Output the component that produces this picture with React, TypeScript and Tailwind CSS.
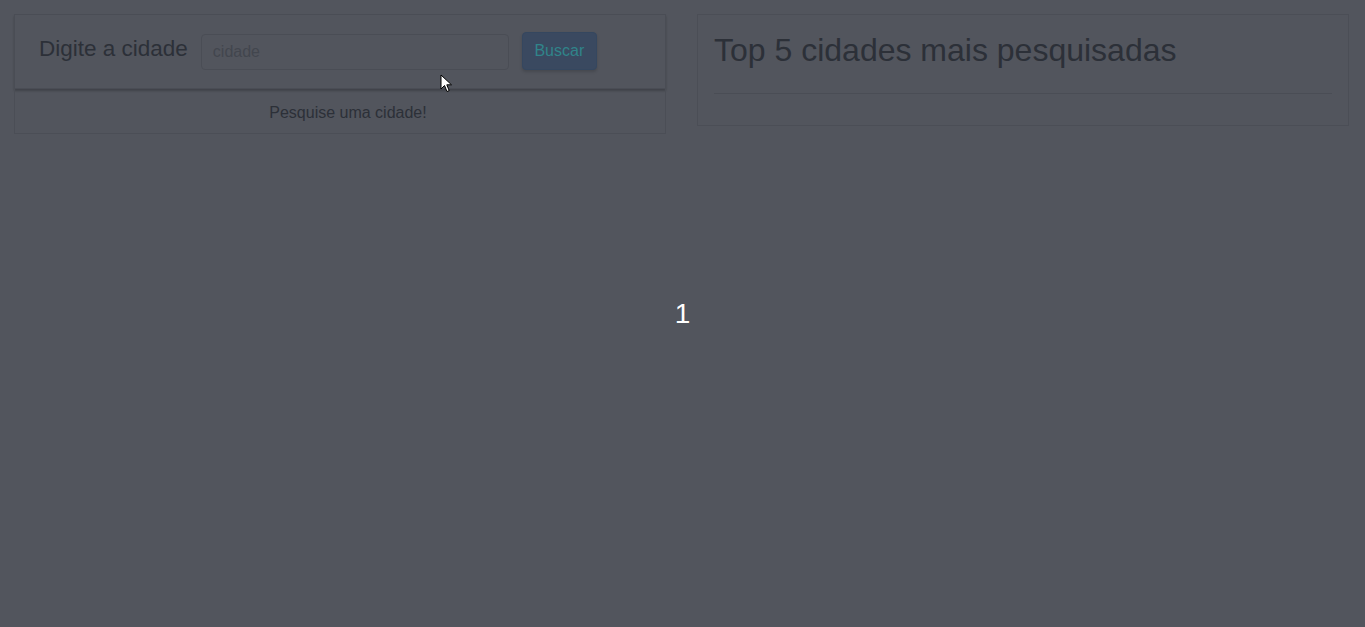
import React from 'react';

const Cursor: React.FC = () => (
  <svg className="absolute left-[440px] top-[74px]" width="14" height="20" viewBox="0 0 14 20">
    <path d="M1 1 L1 15 L4.5 11.5 L7 17.5 L9.2 16.6 L6.8 10.8 L11.5 10.8 Z" fill="#ffffff" stroke="#000000" strokeWidth="1" strokeLinejoin="round" />
  </svg>
);

export default function App() {
  return (
    <div
      className="relative min-h-screen bg-[#52555d] text-[#2c3038]"
      style={{ fontFamily: '"Liberation Sans", Arial, sans-serif' }}
    >
      <div className="flex gap-[31px] px-[14px] pt-[14px]">
        {/* search column */}
        <div className="w-[652px]">
          <div className="flex h-[75px] items-center border border-[#4a4d55] pl-[24px] shadow-[0_2px_2px_rgba(0,0,0,0.22)]">
            <span className="text-[22.5px] leading-none -mt-[5px]">Digite a cidade</span>
            <input
              placeholder="cidade"
              className="ml-[13px] h-[36px] w-[308px] rounded-[4px] border border-[#4a4d55] bg-transparent px-[11px] text-[16px] outline-none placeholder:text-[#42464e]"
            />
            <button className="ml-[13px] -mt-[2px] h-[38px] w-[75px] rounded-[4px] border border-[#35475f] bg-[#3a4960] text-[16px] text-[#30848a] shadow-[0_2px_3px_rgba(0,0,0,0.15)]">
              Buscar
            </button>
          </div>
          <div className="flex h-[45px] items-center justify-center border border-t-0 border-[#4b4e56] pl-[16px] pt-[3px] text-[16px]">
            Pesquise uma cidade!
          </div>
        </div>

        {/* ranking column */}
        <div className="h-[112px] w-[652px] border border-[#4b4e56] px-[16px]">
          <h2 className="pt-[17px] text-[32px] leading-[36px]">Top 5 cidades mais pesquisadas</h2>
          <hr className="mt-[25px] border-[#4a4d55]" />
        </div>
      </div>

      <div className="pointer-events-none absolute inset-0 flex items-center justify-center">
        <span className="text-[28px] leading-none text-white">1</span>
      </div>

      <Cursor />
    </div>
  );
}
